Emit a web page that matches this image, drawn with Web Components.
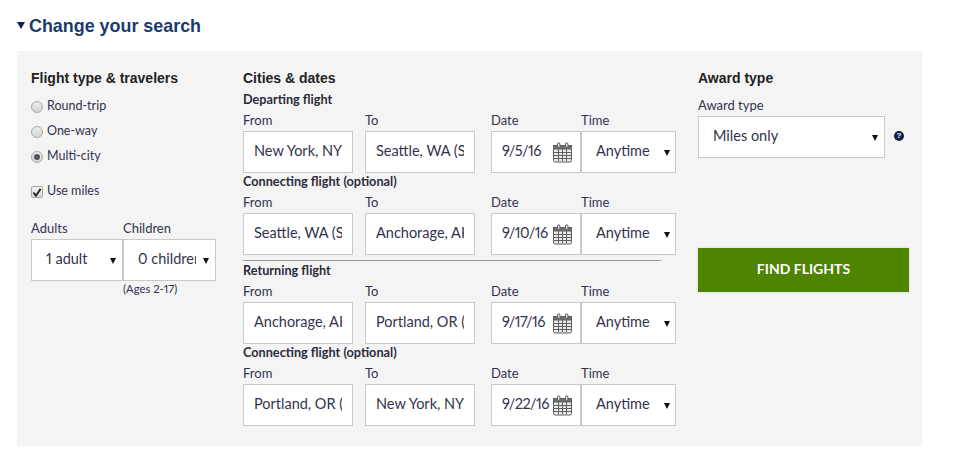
<!DOCTYPE html>
<html>
<head>
<meta charset="utf-8">
<title>Change your search</title>
<style>
  html, body { margin: 0; padding: 0; background: #fff; overflow: hidden; }
  body { font-family: Lato, "Liberation Sans", sans-serif; color: #2d2d45; font-variant-numeric: proportional-nums; }
</style>
</head>
<body>
<search-page></search-page>

<template id="field-tpl">
  <style>
    :host { display: flex; flex-direction: column; width: var(--w, 110px); }
    .label { height: 20px; font-size: 13px; line-height: 18px; color: #33334d; white-space: nowrap; }
    .box { box-sizing: border-box; height: 42px; background: #fff; border: 1px solid #c9c9c9; display: flex; align-items: center; padding: 0 var(--pr, 10px) 3px var(--pl, 10px); font-size: 14.5px; letter-spacing: var(--ls, 0); color: #33334d; white-space: nowrap; overflow: hidden; }
    .val { flex: 1; overflow: hidden; }
    .arrow { width: 0; height: 0; margin-left: var(--gap, 4px); border-left: 3.5px solid transparent; border-right: 3.5px solid transparent; border-top: 6px solid #111; flex: none; display: none; position: relative; top: 2px; }
    :host([select]) .arrow { display: block; }
    ::slotted(calendar-icon) { position: relative; top: 2px; }
  </style>
  <div class="label"></div>
  <div class="box"><div class="val"></div><slot></slot><div class="arrow"></div></div>
</template>

<script>
class SearchField extends HTMLElement {
  constructor() {
    super();
    this.attachShadow({ mode: 'open' });
    this.shadowRoot.appendChild(document.getElementById('field-tpl').content.cloneNode(true));
  }
  connectedCallback() {
    this.shadowRoot.querySelector('.label').textContent = this.getAttribute('label') || '';
    this.shadowRoot.querySelector('.val').textContent = this.getAttribute('value') || '';
  }
}

class CalendarIcon extends HTMLElement {
  constructor() {
    super();
    this.attachShadow({ mode: 'open' });
    let lines = '';
    for (const x of [6.5, 10.5, 14.5]) lines += `<path d="M${x} 7V19"/>`;
    for (const y of [10.5, 13.5, 16.5]) lines += `<path d="M2 ${y}H19"/>`;
    this.shadowRoot.innerHTML = `
      <style>:host { display: block; width: 21px; height: 21px; flex: none; } svg { display: block; }</style>
      <svg width="21" height="21" viewBox="0 0 21 21" fill="none" stroke="#5f5f5f" stroke-width="1">
        <rect x="1.5" y="3.5" width="18" height="16.5" rx="1.5" fill="#e9e9e9"/>
        <rect x="1.5" y="3.5" width="18" height="3.5" fill="#6e6e6e"/>
        ${lines}
        <path d="M5.5 4.5V2a1.2 1.2 0 0 1 2.4 0V4.5M13.5 4.5V2a1.2 1.2 0 0 1 2.4 0V4.5" stroke="#5a5a5a" fill="#f4f4f4"/>
      </svg>`;
  }
}
customElements.define('calendar-icon', CalendarIcon);
customElements.define('search-field', SearchField);

class FlightLeg extends HTMLElement {
  constructor() {
    super();
    this.attachShadow({ mode: 'open' });
  }
  connectedCallback() {
    const a = (n) => this.getAttribute(n);
    this.shadowRoot.innerHTML = `
      <style>
        :host { display: block; }
        .title { height: 16px; font-size: 12.7px; line-height: 16px; font-weight: 700; color: #2b2b3a; white-space: nowrap; }
        .row { display: flex; margin-top: 4px; }
        search-field.to { margin-left: 12px; }
        search-field.date { margin-left: 16px; --w: 90px; --pr: 7px; --ls: -.55px; }
        search-field.time { --w: 95px; --pl: 14px; --pr: 5px; }
      </style>
      <div class="title">${a('title')}</div>
      <div class="row">
        <search-field label="From" value="${a('from')}"></search-field>
        <search-field class="to" label="To" value="${a('to')}"></search-field>
        <search-field class="date" label="Date" value="${a('date')}"><calendar-icon></calendar-icon></search-field>
        <search-field class="time" label="Time" value="Anytime" select></search-field>
      </div>`;
  }
}
customElements.define('flight-leg', FlightLeg);

class ChoiceOption extends HTMLElement {
  constructor() {
    super();
    this.attachShadow({ mode: 'open' });
  }
  connectedCallback() {
    const isBox = this.getAttribute('type') === 'checkbox';
    const on = this.hasAttribute('checked');
    const mark = !on ? '' : isBox
      ? '<svg width="11" height="11" viewBox="0 0 11 11"><path d="M1.5 5.5L4.3 9L9.5 1.5" fill="none" stroke="#222" stroke-width="2"/></svg>'
      : '<span class="dot"></span>';
    this.shadowRoot.innerHTML = `
      <style>
        :host { display: flex; align-items: flex-start; height: 25px; font-size: 12.5px; line-height: 16px; color: #33334d; }
        .mark { box-sizing: border-box; width: 12px; height: 12px; margin-top: 1px; margin-right: 4px; border: 1px solid #a9a9a9; border-radius: 50%; background: linear-gradient(#ededed, #d4d4d4); display: flex; align-items: center; justify-content: center; }
        :host([type=checkbox]) .mark { border-radius: 2px; background: linear-gradient(#f2f2f2, #d8d8d8); }
        .dot { width: 6px; height: 6px; border-radius: 50%; background: #555; }
        span.text { position: relative; top: -2px; }
      </style>
      <span class="mark">${mark}</span><span class="text"><slot></slot></span>`;
  }
}
customElements.define('choice-option', ChoiceOption);

class SearchPage extends HTMLElement {
  constructor() {
    super();
    this.attachShadow({ mode: 'open' });
    this.shadowRoot.innerHTML = `
      <style>
        :host { display: block; width: 965px; height: 457px; box-sizing: border-box; padding: 15px 0 0 17px; }
        h1 { margin: 0; height: 36px; display: flex; font: 700 17.9px/22px "Liberation Sans", Arial, sans-serif; color: #1a3a6c; }
        .tri { width: 0; height: 0; margin: 7px 4px 0 0; border-left: 4px solid transparent; border-right: 4px solid transparent; border-top: 7px solid #10204d; }
        .panel { box-sizing: border-box; width: 905px; height: 395px; background: #f4f4f4; display: flex; padding: 18px 0 0 14px; }
        h2 { margin: 0; height: 22px; font: 700 14px/18px "Liberation Sans", Arial, sans-serif; color: #222; white-space: nowrap; }
        .left { width: 212px; flex: none; }
        .mid { width: 455px; flex: none; }
        .right { width: 212px; flex: none; }
        .opts { margin-top: 9px; }
        .miles { margin-top: 10px; }
        .pax { display: flex; margin-top: 9px; }
        .pax search-field { --w: 92px; --pl: 14px; --pr: 6px; }
        .pax search-field.kids { --w: 93px; --pl: 14px; --gap: 7px; }
        .ages { margin: 0 0 0 92px; font-size: 11.3px; line-height: 15px; color: #33334d; }
        hr { margin: 5px 0 1px; width: 418px; border: 0; border-top: 1px solid #9b9b9b; height: 0; }
        .award { display: flex; align-items: center; margin-top: 5px; }
        .award search-field { --w: 187px; --pl: 14px; --pr: 6px; }
        .help { width: 10px; height: 10px; margin: 18px 0 0 9px; border-radius: 50%; background: #10204d; color: #fff; font: 700 8px/10px "Liberation Sans", sans-serif; text-align: center; }
        button { display: block; width: 211px; height: 44px; margin-top: 90px; padding: 0 0 3px; border: 0; background: #4f8400; color: #fff; font: 700 14px/40px Lato, sans-serif; box-shadow: 0 0 2px #cfcfcf; }
      </style>
      <h1><span class="tri"></span>Change your search</h1>
      <div class="panel">
        <section class="left">
          <h2>Flight type &amp; travelers</h2>
          <div class="opts">
            <choice-option type="radio">Round-trip</choice-option>
            <choice-option type="radio">One-way</choice-option>
            <choice-option type="radio" checked>Multi-city</choice-option>
          </div>
          <div class="miles"><choice-option type="checkbox" checked>Use miles</choice-option></div>
          <div class="pax">
            <search-field label="Adults" value="1 adult" select></search-field>
            <search-field class="kids" label="Children" value="0 children" select></search-field>
          </div>
          <div class="ages">(Ages 2-17)</div>
        </section>
        <section class="mid">
          <h2>Cities &amp; dates</h2>
          <flight-leg title="Departing flight" from="New York, NY" to="Seattle, WA (SEA)" date="9/5/16"></flight-leg>
          <flight-leg title="Connecting flight (optional)" from="Seattle, WA (SEA)" to="Anchorage, AK" date="9/10/16"></flight-leg>
          <hr>
          <flight-leg title="Returning flight" from="Anchorage, AK" to="Portland, OR (PDX)" date="9/17/16"></flight-leg>
          <flight-leg title="Connecting flight (optional)" from="Portland, OR (PDX)" to="New York, NY" date="9/22/16"></flight-leg>
        </section>
        <section class="right">
          <h2>Award type</h2>
          <div class="award">
            <search-field label="Award type" value="Miles only" select></search-field>
            <span class="help">?</span>
          </div>
          <button>FIND FLIGHTS</button>
        </section>
      </div>`;
  }
}
customElements.define('search-page', SearchPage);
</script>
</body>
</html>
